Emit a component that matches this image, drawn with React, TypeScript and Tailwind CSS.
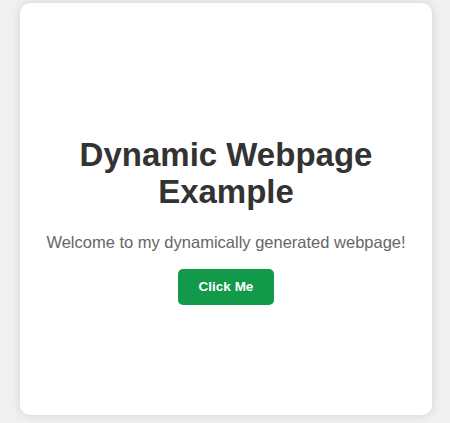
export default function App() {
  return (
    <div className="min-h-[423px] bg-[#f0f0f0] pt-[3px] font-['Liberation_Sans',Arial,sans-serif]">
      {/* card */}
      <div className="ml-[20px] flex h-[412px] w-[412px] flex-col items-center rounded-[10px] bg-white pt-[133px] shadow-[0_0_10px_rgba(0,0,0,0.12)]">
        <h1 className="text-center text-[33px] leading-[37px] font-bold text-[#333]">
          Dynamic Webpage
          <br />
          Example
        </h1>
        <p className="mt-[23px] text-[16.5px] leading-[19px] text-[#666]">
          Welcome to my dynamically generated webpage!
        </p>
        <button className="mt-[17px] rounded-[5px] bg-[#12994a] px-[21px] py-2.5 text-[13.5px] leading-4 font-bold text-white">
          Click Me
        </button>
      </div>
    </div>
  );
}
